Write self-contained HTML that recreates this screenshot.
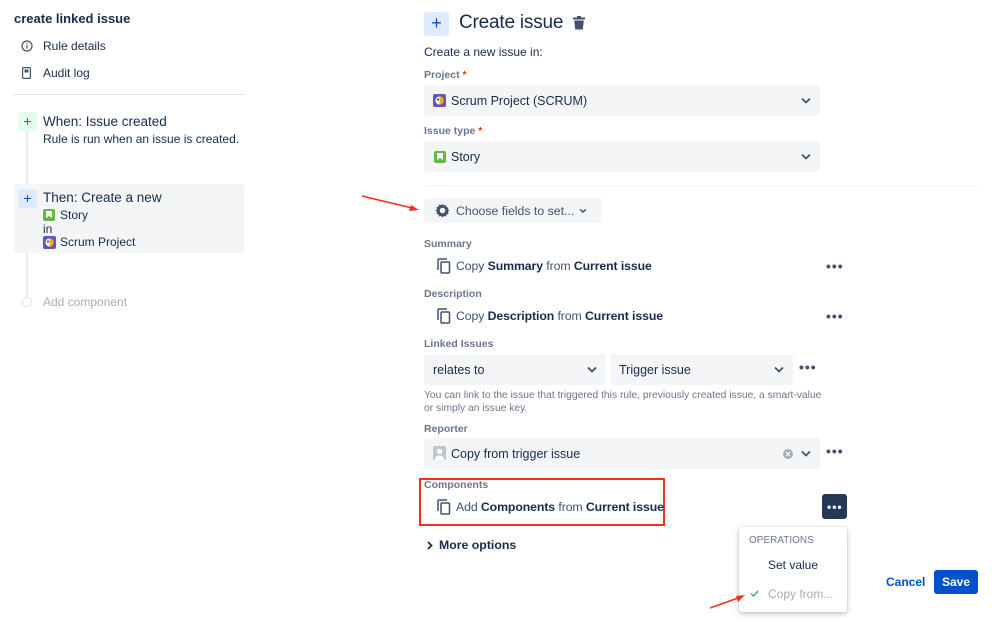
<!DOCTYPE html>
<html><head><meta charset="utf-8">
<style>
*{margin:0;padding:0;box-sizing:border-box}
body{width:998px;height:622px;background:#fff;font-family:"Liberation Sans",sans-serif;color:#172b4d;position:relative;overflow:hidden;font-size:13px}
.a{position:absolute;white-space:nowrap}
.lbl{position:absolute;font-size:10.5px;font-weight:bold;color:#6b778c}
.req{color:#de350b}
.sel{position:absolute;background:#f4f5f7;border-radius:3px}
.sel .t{position:absolute;top:50%;transform:translateY(-50%);font-size:12.5px}
.chev{position:absolute;top:50%;transform:translateY(-50%)}
.dots{position:absolute;font-size:14px;font-weight:bold;letter-spacing:1px;color:#42526e;line-height:10px}
.row{font-size:12.3px;letter-spacing:-0.1px}
b{font-weight:bold}
</style></head><body>

<!-- left -->
<div class="a" style="left:14px;top:11px;font-size:13px;font-weight:bold">create linked issue</div>
<svg class="a" style="left:21px;top:40px" width="12" height="12" viewBox="0 0 12 12"><circle cx="6" cy="6" r="5" fill="none" stroke="#42526e" stroke-width="1.2"/><rect x="5.4" y="5" width="1.2" height="3.5" fill="#42526e"/><circle cx="6" cy="3.4" r=".7" fill="#42526e"/></svg>
<div class="a" style="left:43px;top:39px;font-size:12px">Rule details</div>
<svg class="a" style="left:22px;top:67px" width="9" height="12" viewBox="0 0 9 12"><rect x=".6" y=".6" width="7.8" height="10.8" rx="1" fill="none" stroke="#42526e" stroke-width="1.2"/><rect x="2.5" y="2.5" width="4" height="3" fill="#42526e"/></svg>
<div class="a" style="left:43px;top:66px;font-size:12px">Audit log</div>
<div class="a" style="left:14px;top:94px;width:230px;height:1px;background:#dfe1e6"></div>
<div class="a" style="left:26px;top:120px;width:2px;height:178px;background:#ebecf0"></div>
<div class="a" style="left:18px;top:112px;width:19px;height:19px;background:#e3fcef;border-radius:3px;color:#00875a;font-size:14px;text-align:center;line-height:18px">+</div>
<div class="a" style="left:43px;top:114px;font-size:13.5px">When: Issue created</div>
<div class="a" style="left:43px;top:132px;font-size:12px">Rule is run when an issue is created.</div>
<div class="a" style="left:14px;top:184px;width:230px;height:69px;background:#f4f5f7;border-radius:3px"></div>
<div class="a" style="left:18px;top:189px;width:19px;height:19px;background:#deebff;border-radius:3px;color:#0052cc;font-size:14px;text-align:center;line-height:18px">+</div>
<div class="a" style="left:43px;top:190px;font-size:13.5px">Then: Create a new</div>
<div class="a" style="left:43px;top:209px;width:12px;height:12px;background:#63ba3c;border-radius:2px"><div style="position:absolute;left:3px;top:2px;width:6px;height:7px;background:#fff;clip-path:polygon(0 0,100% 0,100% 100%,50% 70%,0 100%)"></div></div>
<div class="a" style="left:60px;top:208px;font-size:12px">Story</div>
<div class="a" style="left:43px;top:222px;font-size:12px">in</div>
<svg class="a" style="left:43px;top:236px" width="13" height="13" viewBox="0 0 13 13"><rect width="13" height="13" rx="2" fill="#6554c0"/><circle cx="6.5" cy="6.5" r="4" fill="#fff"/><path d="M6.5 2.5a4 4 0 0 1 0 8z" fill="#ffab00"/><circle cx="5" cy="5.5" r="1" fill="#172b4d"/></svg>
<div class="a" style="left:60px;top:235px;font-size:12px">Scrum Project</div>
<div class="a" style="left:22px;top:297px;width:10px;height:10px;border:1px solid #dfe1e6;border-radius:50%;background:#fff"></div>
<div class="a" style="left:43px;top:295px;font-size:12px;color:#a5adba">Add component</div>

<!-- right -->
<div class="a" style="left:424px;top:12px;width:25px;height:24px;background:#deebff;border-radius:3px;color:#0052cc;font-size:18px;text-align:center;line-height:23px">+</div>
<div class="a" style="left:459px;top:12px;font-size:19px;letter-spacing:-0.2px">Create issue</div>
<svg class="a" style="left:573px;top:16px" width="12" height="14" viewBox="0 0 12 14"><rect x="0" y="1.5" width="12" height="2" rx=".5" fill="#42526e"/><rect x="4" y="0" width="4" height="2" fill="#42526e"/><path d="M1.2 4.5h9.6l-1 9H2.2z" fill="#42526e"/></svg>
<div class="a" style="left:424px;top:45px;font-size:12px">Create a new issue in:</div>
<div class="lbl" style="left:424px;top:69px">Project<span class="req"> *</span></div>
<div class="sel" style="left:424px;top:85px;width:396px;height:31px">
<svg style="position:absolute;left:9px;top:9px" width="13" height="13" viewBox="0 0 13 13"><rect width="13" height="13" rx="2" fill="#6554c0"/><circle cx="6.5" cy="6.5" r="4" fill="#fff"/><path d="M6.5 2.5a4 4 0 0 1 0 8z" fill="#ffab00"/><circle cx="5" cy="5.5" r="1" fill="#172b4d"/></svg>
<span class="t" style="left:27px">Scrum Project (SCRUM)</span>
<svg class="chev" style="right:9px" width="10" height="7" viewBox="0 0 10 7"><path d="M1 1l4 4 4-4" fill="none" stroke="#42526e" stroke-width="1.8"/></svg></div>
<div class="lbl" style="left:424px;top:125px">Issue type<span class="req"> *</span></div>
<div class="sel" style="left:424px;top:141px;width:396px;height:31px">
<div style="position:absolute;left:10px;top:10px;width:12px;height:12px;background:#63ba3c;border-radius:2px"><div style="position:absolute;left:3px;top:2px;width:6px;height:7px;background:#fff;clip-path:polygon(0 0,100% 0,100% 100%,50% 70%,0 100%)"></div></div>
<span class="t" style="left:27px">Story</span>
<svg class="chev" style="right:9px" width="10" height="7" viewBox="0 0 10 7"><path d="M1 1l4 4 4-4" fill="none" stroke="#42526e" stroke-width="1.8"/></svg></div>
<div class="a" style="left:424px;top:185px;width:554px;height:1px;background:#f4f5f7"></div>
<div class="sel" style="left:424px;top:198px;width:178px;height:25px">
<svg style="position:absolute;left:11px;top:5px" width="15" height="15" viewBox="0 0 16 16"><path d="M8 1l1.5 1.7 2.2-.6.5 2.2 2.2.6-.6 2.2L15.5 8l-1.7 1.5.6 2.2-2.2.5-.6 2.2-2.2-.6L8 15.5 6.5 13.8l-2.2.6-.5-2.2-2.2-.6.6-2.2L.5 8l1.7-1.5-.6-2.2 2.2-.5.6-2.2 2.2.6z" fill="#42526e"/><circle cx="8" cy="8" r="3" fill="#f4f5f7"/></svg>
<span class="t" style="left:32px;color:#42526e;font-size:12.3px">Choose fields to set...</span>
<svg class="chev" style="left:155px" width="8" height="5" viewBox="0 0 10 7"><path d="M1 1l4 4 4-4" fill="none" stroke="#42526e" stroke-width="2"/></svg></div>

<div class="lbl" style="left:424px;top:238px">Summary</div>
<svg class="a" style="left:437px;top:258px" width="14" height="16" viewBox="0 0 14 16"><path d="M1 12V2a1 1 0 0 1 1-1h8" fill="none" stroke="#42526e" stroke-width="1.5"/><rect x="4" y="4" width="8.5" height="11" rx="1" fill="none" stroke="#42526e" stroke-width="1.5"/></svg>
<div class="a row" style="left:456px;top:259px;color:#42526e">Copy <b style="color:#172b4d">Summary</b> from <b style="color:#172b4d">Current issue</b></div>
<div class="dots" style="left:826px;top:261px">•••</div>
<div class="lbl" style="left:424px;top:288px">Description</div>
<svg class="a" style="left:437px;top:308px" width="14" height="16" viewBox="0 0 14 16"><path d="M1 12V2a1 1 0 0 1 1-1h8" fill="none" stroke="#42526e" stroke-width="1.5"/><rect x="4" y="4" width="8.5" height="11" rx="1" fill="none" stroke="#42526e" stroke-width="1.5"/></svg>
<div class="a row" style="left:456px;top:309px;color:#42526e">Copy <b style="color:#172b4d">Description</b> from <b style="color:#172b4d">Current issue</b></div>
<div class="dots" style="left:826px;top:311px">•••</div>
<div class="lbl" style="left:424px;top:338px">Linked Issues</div>
<div class="sel" style="left:424px;top:354px;width:182px;height:31px"><span class="t" style="left:9px">relates to</span>
<svg class="chev" style="right:9px" width="10" height="7" viewBox="0 0 10 7"><path d="M1 1l4 4 4-4" fill="none" stroke="#42526e" stroke-width="1.8"/></svg></div>
<div class="sel" style="left:610px;top:354px;width:183px;height:31px"><span class="t" style="left:9px">Trigger issue</span>
<svg class="chev" style="right:9px" width="10" height="7" viewBox="0 0 10 7"><path d="M1 1l4 4 4-4" fill="none" stroke="#42526e" stroke-width="1.8"/></svg></div>
<div class="dots" style="left:799px;top:362px">•••</div>
<div class="a" style="left:424px;top:389px;font-size:10.3px;color:#6b778c;line-height:13px">You can link to the issue that triggered this rule, previously created issue, a smart-value<br>or simply an issue key.</div>
<div class="lbl" style="left:424px;top:423px">Reporter</div>
<div class="sel" style="left:424px;top:438px;width:396px;height:31px">
<svg style="position:absolute;left:9px;top:8px" width="13" height="14" viewBox="0 0 13 14"><rect width="13" height="14" rx="2" fill="#c1c7d0"/><circle cx="6.5" cy="5.5" r="2.6" fill="#fff"/><path d="M2 14c0-3 2-4.5 4.5-4.5S11 11 11 14z" fill="#fff"/></svg>
<span class="t" style="left:27px">Copy from trigger issue</span>
<svg style="position:absolute;left:359px;top:11px" width="10" height="10" viewBox="0 0 10 10"><circle cx="5" cy="5" r="5" fill="#a5adba"/><path d="M3 3l4 4M7 3l-4 4" stroke="#f4f5f7" stroke-width="1.3"/></svg>
<svg class="chev" style="right:9px" width="10" height="7" viewBox="0 0 10 7"><path d="M1 1l4 4 4-4" fill="none" stroke="#42526e" stroke-width="1.8"/></svg></div>
<div class="dots" style="left:826px;top:446px">•••</div>
<div class="a" style="left:419px;top:478px;width:246px;height:48px;border:2px solid #f0311f"></div>
<div class="lbl" style="left:424px;top:479px">Components</div>
<svg class="a" style="left:437px;top:499px" width="14" height="16" viewBox="0 0 14 16"><path d="M1 12V2a1 1 0 0 1 1-1h8" fill="none" stroke="#42526e" stroke-width="1.5"/><rect x="4" y="4" width="8.5" height="11" rx="1" fill="none" stroke="#42526e" stroke-width="1.5"/></svg>
<div class="a row" style="left:456px;top:500px;color:#42526e">Add <b style="color:#172b4d">Components</b> from <b style="color:#172b4d">Current issue</b></div>
<div class="a" style="left:822px;top:494px;width:25px;height:25px;background:#253858;border-radius:3px"><div class="dots" style="left:5px;top:8px;color:#fff;font-size:12px">•••</div></div>
<svg class="a" style="left:427px;top:541px" width="6" height="9" viewBox="0 0 6 9"><path d="M1 1l3.5 3.5L1 8" fill="none" stroke="#172b4d" stroke-width="1.8"/></svg>
<div class="a" style="left:439px;top:538px;font-weight:bold;font-size:12.3px">More options</div>

<div class="a" style="left:739px;top:527px;width:108px;height:85px;background:#fff;border-radius:3px;box-shadow:0 2px 6px rgba(9,30,66,.25),0 0 1px rgba(9,30,66,.3)"></div>
<div class="a" style="left:749px;top:535px;font-size:10px;color:#6b778c">OPERATIONS</div>
<div class="a" style="left:768px;top:558px;font-size:12px">Set value</div>
<svg class="a" style="left:750px;top:590px" width="9" height="7" viewBox="0 0 9 7"><path d="M1 3.5l2.5 2.5L8 1" fill="none" stroke="#36b37e" stroke-width="1.5"/></svg>
<div class="a" style="left:768px;top:587px;font-size:12px;color:#a5adba">Copy from...</div>

<div class="a" style="left:886px;top:575px;color:#0052cc;font-weight:bold;font-size:12px">Cancel</div>
<div class="a" style="left:934px;top:570px;width:44px;height:24px;background:#0052cc;border-radius:3px;color:#fff;font-weight:bold;font-size:12px;text-align:center;line-height:24px">Save</div>

<!-- arrows -->
<svg class="a" style="left:0;top:0" width="998" height="622">
<line x1="362" y1="196" x2="412" y2="208" stroke="#f0311f" stroke-width="1.5"/>
<path d="M419 210l-10 1 2-6z" fill="#f0311f"/>
<line x1="710" y1="608" x2="738" y2="598" stroke="#f0311f" stroke-width="1.5"/>
<path d="M745 595l-7 7-2-6z" fill="#f0311f"/>
</svg>
</body></html>
